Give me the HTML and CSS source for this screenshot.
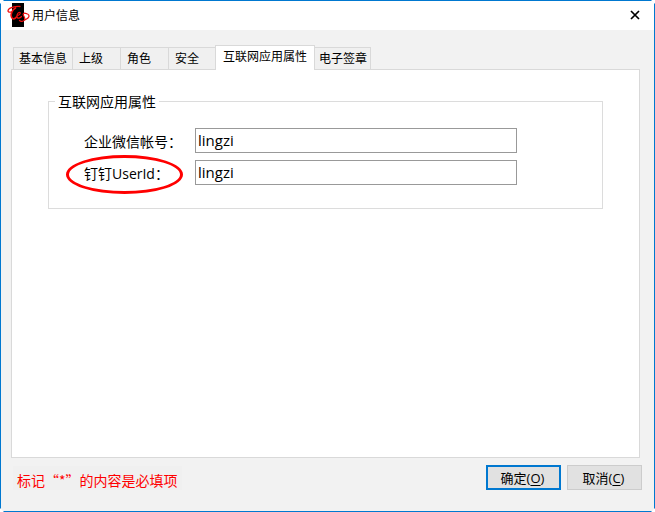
FILE: index.html
```html
<!DOCTYPE html>
<html lang="zh-CN">

<head>
    <meta charset="UTF-8">
    <title>用户信息</title>

    <link rel="stylesheet" href="styles.css">
</head>

<body>

    <form class="window">
        <header class="titlebar">
            <svg class="logo" viewBox="0 0 24 24" aria-hidden="true">
                <rect x="5" y="0" width="12" height="24" fill="#000"></rect>
                <g fill="none" stroke="#f00d0d" stroke-linecap="round">
                    <path d="M13 3.500C8 3 1 5 1 8C1 9 2.500 9.500 4 9" stroke-width="1.300"></path>
                    <path d="M8.500 5C5 7 3.500 11 4.500 14C5.500 17 8 16 9.500 14" stroke-width="1.700"></path>
                    <path d="M10 12.500C12 12.500 14 10.500 13 9.500C11 9 9.500 12 10 14C10.500 16 13 15 14.500 13.500" stroke-width="1.200"></path>
                    <path d="M19 10.500C17 9.500 15.500 11 16.500 12.500C17.500 14 18.500 15 17.500 17C16.500 18.500 14 19 12.500 17.500" stroke-width="1.300"></path>
                    <path d="M19 10.500C22 11 23 13 21 15C20 16 18.500 16.500 17.500 17" stroke-width="1.200"></path>
                </g>
            </svg>
            <h1 class="title">用户信息</h1>
            <button class="close" type="button" aria-label="关闭">
                <svg viewBox="0 0 10 10">
                    <path d="M1 1L9 9M9 1L1 9" stroke="#000" stroke-width="1.700"></path>
                </svg>
            </button>
        </header>

        <nav class="tabs" role="tablist">
            <button class="tab" type="button" role="tab">基本信息</button>
            <button class="tab" type="button" role="tab">上级</button>
            <button class="tab" type="button" role="tab">角色</button>
            <button class="tab" type="button" role="tab">安全</button>
            <button class="tab active" type="button" role="tab" aria-selected="true">互联网应用属性</button>
            <button class="tab" type="button" role="tab">电子签章</button>
        </nav>

        <main class="panel" role="tabpanel">
            <fieldset class="group">
                <legend>互联网应用属性</legend>
                <div class="row">
                    <label for="wechat">企业微信帐号：</label>
                    <input id="wechat" type="text" value="lingzi">
                </div>
                <div class="row">
                    <label class="marked" for="dingding">钉钉UserId：</label>
                    <input id="dingding" type="text" value="lingzi">
                </div>
            </fieldset>
        </main>

        <footer class="footer">
            <p class="note">标记“*”的内容是必填项</p>
            <button class="btn primary" type="submit">确定(<u>O</u>)</button>
            <button class="btn" type="button">取消(<u>C</u>)</button>
        </footer>
    </form>

</body>

</html>
```
FILE: styles.css
```css
*,
*::after {
    box-sizing: border-box;
}

body {
    margin: 0;
    background-color: white;
    color: black;
    font-family: "Open Sans", "Noto Sans CJK SC", sans-serif;
    font-size: 14px;
}

button,
input {
    font-family: inherit;
    color: inherit;
}

.window {
    display: flex;
    flex-direction: column;
    min-height: 100vh;
    border: 1px solid #0078d0;
    background-color: #f2f2f2;
    /* cut corners */
    clip-path: polygon(4px 0, calc(100% - 4px) 0, 100% 4px, 100% calc(100% - 4px), calc(100% - 4px) 100%, 4px 100%, 0 calc(100% - 4px), 0 4px);
}

.titlebar {
    display: flex;
    align-items: center;
    height: 29px;
    padding: 0 14px 2px 6px;
    background-color: white;
}

.logo {
    width: 24px;
    height: 24px;
}

.title {
    flex: 1;
    margin: 0 0 0 1px;
    font-size: 12px;
    font-weight: normal;
}

.close {
    width: 10px;
    height: 10px;
    padding: 0;
    border: 0;
    background: none;
}

.close svg {
    display: block;
}

/* tabs */

.tabs {
    display: flex;
    align-items: flex-end;
    padding: 15px 12px 0;
}

.tab {
    min-width: 48px;
    height: 22px;
    padding: 0 3px 0 6px;
    border: 1px solid #d9d9d9;
    border-width: 1px 1px 0 0;
    background-color: #f0f0f0;
    font-size: 12px;
    line-height: 20px;
    text-align: left;
}

.tab:first-child {
    padding: 0 5px;
    border-left-width: 1px;
}

.tab.active {
    z-index: 1;
    height: 25px;
    margin: 0 -2px -1px;
    padding: 0 7px 2px;
    border-left-width: 1px;
    background-color: white;
}

.panel {
    flex: 1;
    margin: 0 14px 0 10px;
    padding: 22px 36px;
    border: 1px solid #d9d9d9;
    background-color: white;
}

.group {
    margin: 0;
    padding: 18px 32px 23px 35px;
    border: 1px solid #dcdcdc;
}

.group legend {
    margin-left: -29px;
    padding: 2px 3px 0;
    line-height: 16px;
}

.row {
    display: flex;
    align-items: center;
}

.row + .row {
    margin-top: 7px;
}

.row label {
    position: relative;
    width: 111px;
    padding-top: 2px;
    line-height: 20px;
}

.row input {
    width: 322px;
    height: 25px;
    padding: 0 2px 2px;
    border: 1px solid #999;
    background-color: white;
    font-size: 15px;
}

/* red ring around the label */
.marked::after {
    content: "";
    position: absolute;
    top: -7px;
    left: -18px;
    width: 117px;
    height: 39px;
    border: 3px solid red;
    border-radius: 50%;
}

/* bottom bar */

.footer {
    display: flex;
    align-items: center;
    gap: 6px;
    padding: 7px 12px 21px;
}

.note {
    margin: 0 auto 0 0;
    padding: 4px 4px 0;
    background-color: #f0f0f0;
    color: red;
    font-family: "Noto Sans CJK SC", sans-serif;
    line-height: 20px;
}

.btn {
    width: 75px;
    height: 25px;
    padding: 0 2px 0 0;
    border: 1px solid #ccc;
    background-color: #e1e1e1;
    font-size: 13px;
}

.btn.primary {
    border: 2px solid #0078d0;
}

.btn u {
    text-underline-offset: 2px;
}
```
